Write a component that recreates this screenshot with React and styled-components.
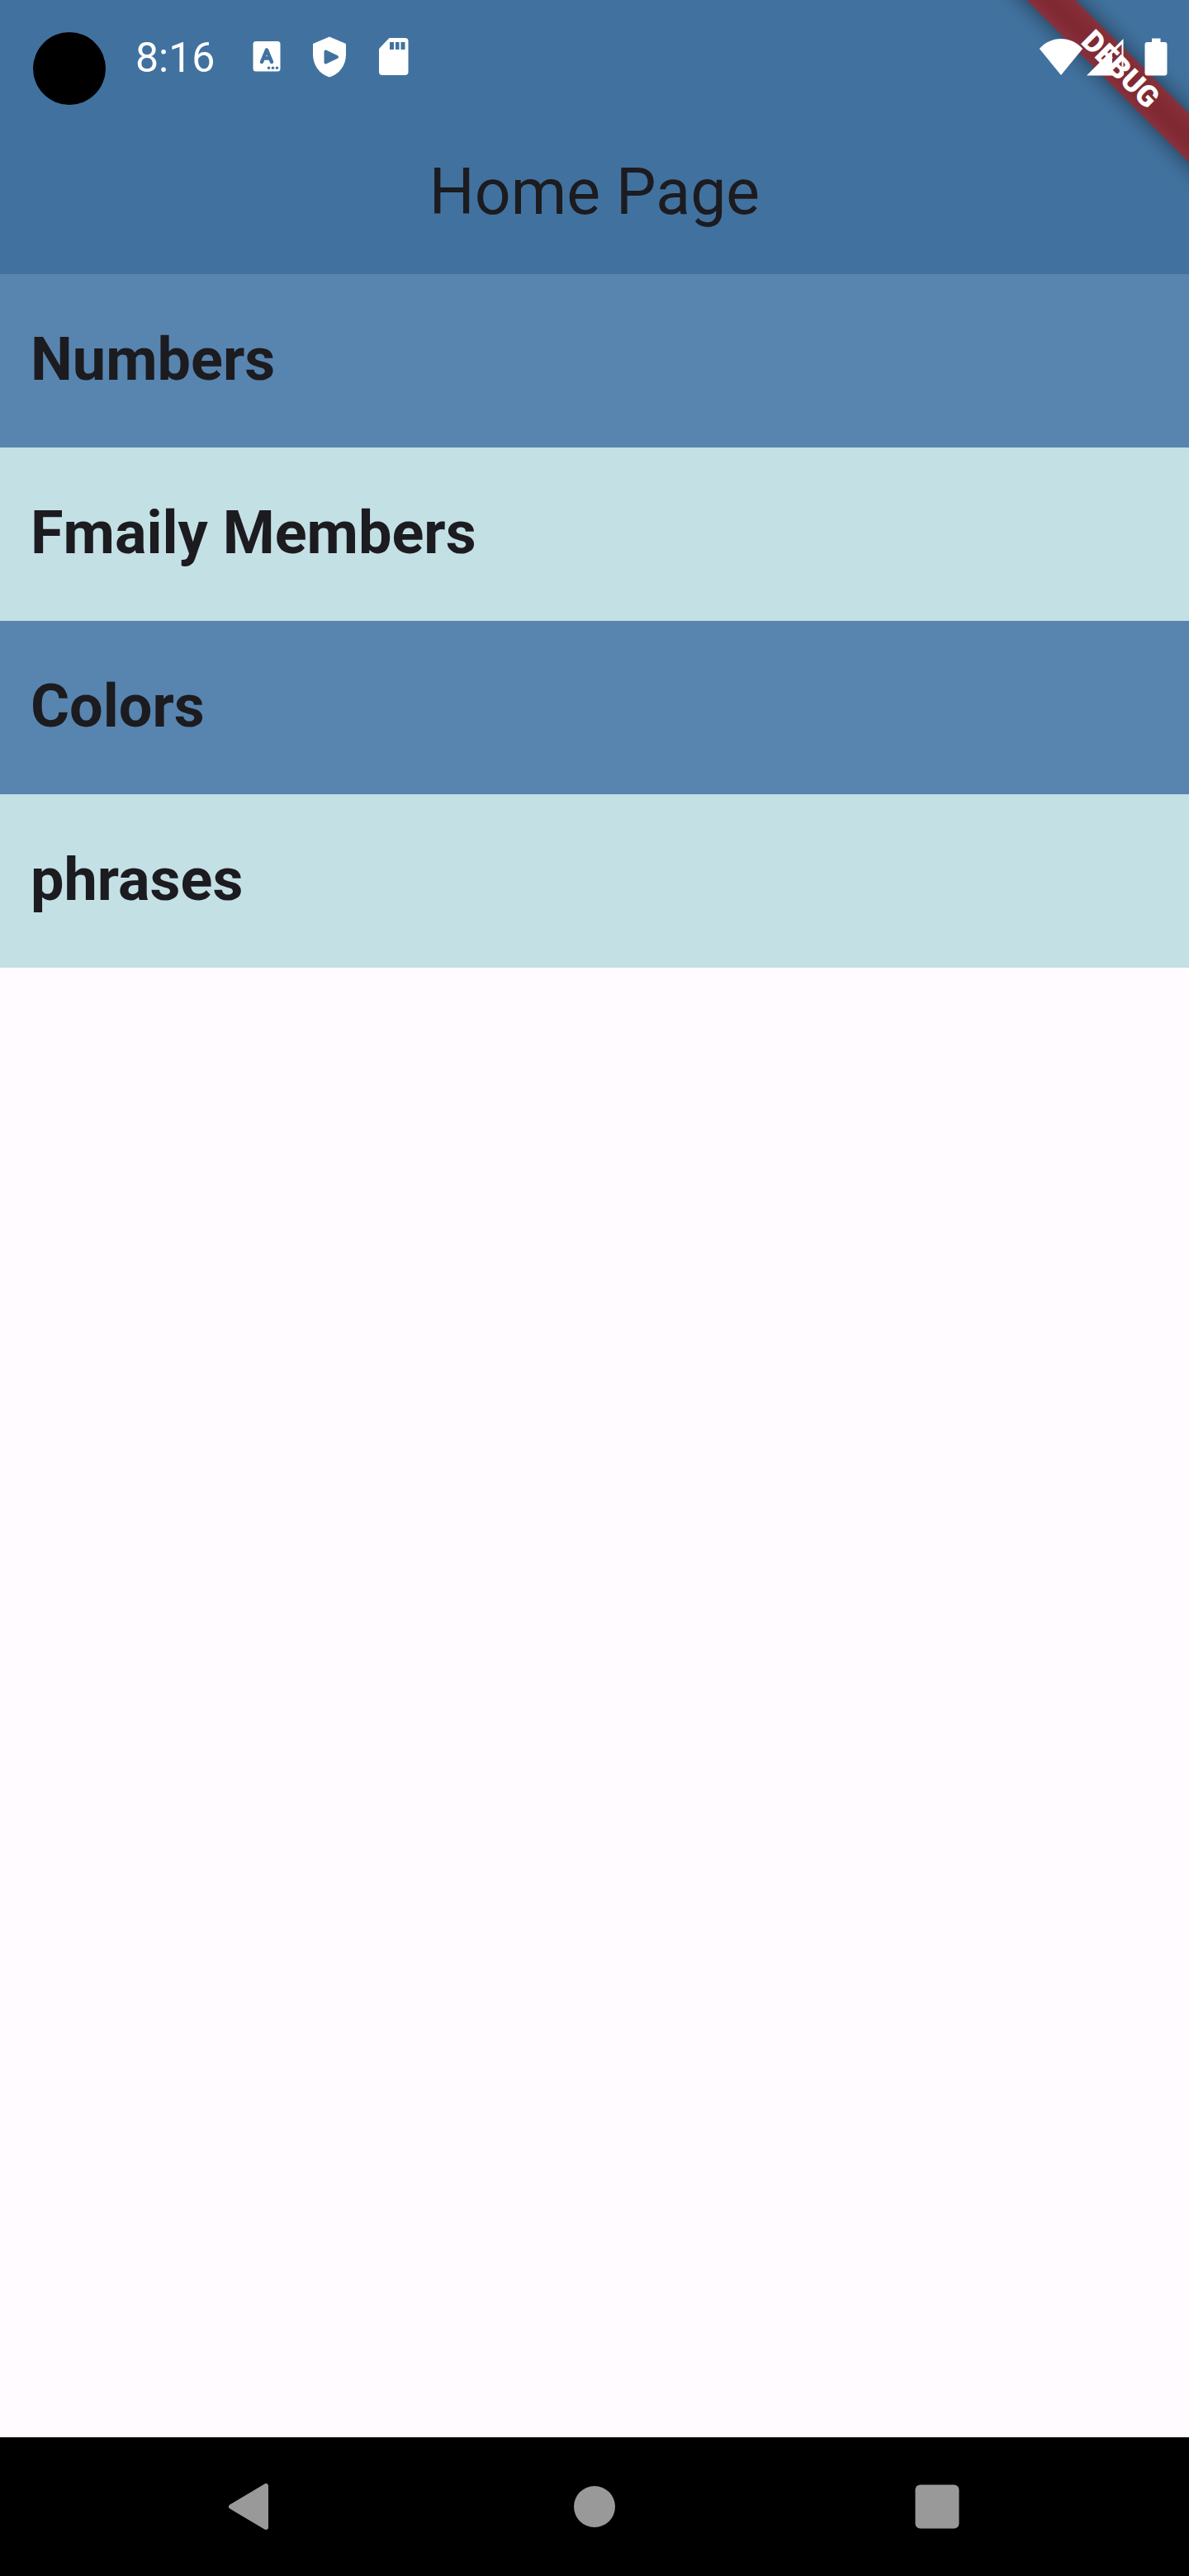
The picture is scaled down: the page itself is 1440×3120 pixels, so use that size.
import React from "react";
import styled, { createGlobalStyle } from "styled-components";

const GlobalStyle = createGlobalStyle`
  *, *::before, *::after { box-sizing: border-box; }
  body {
    margin: 0;
    background: #fffbff;
    color: #1c1b1f;
    font-family: Roboto, "Liberation Sans", sans-serif;
  }
`;

const Screen = styled.div`
  position: relative;
  display: flex;
  flex-direction: column;
  min-height: 100vh;
  overflow: hidden;
`;

const Header = styled.header`
  background: #41729f;
  padding-bottom: 4px;
`;

const StatusBar = styled.div`
  position: relative;
  z-index: 2;
  display: flex;
  align-items: center;
  justify-content: space-between;
  height: 138px;
  padding: 0 26px 0 164px;
  color: #ffffff;
`;

const Camera = styled.div`
  position: absolute;
  top: 39px;
  left: 40px;
  width: 88px;
  height: 88px;
  border-radius: 50%;
  background: #000000;
`;

const StatusGroup = styled.div`
  display: flex;
  align-items: center;
  gap: ${(p) => p.$gap}px;
`;

const Time = styled.time`
  padding-top: 2px;
  font-size: 50px;
  line-height: 58px;
`;

const Icon = styled.svg`
  display: block;
  flex: none;
  fill: currentColor;
`;

const Toolbar = styled.div`
  display: flex;
  align-items: center;
  justify-content: center;
  height: 190px;
`;

const Title = styled.h1`
  margin: 0;
  font-size: 77px;
  font-weight: 400;
  line-height: 92px;
`;

const DebugBanner = styled.div`
  position: absolute;
  z-index: 1;
  top: 63px;
  right: -117px;
  width: 400px;
  color: #ffffff;
  font-size: 36px;
  font-weight: 900;
  line-height: 42px;
  text-align: center;
  transform: rotate(45deg);

  &::before,
  &::after {
    content: "";
    position: absolute;
    inset: 0;
  }

  &::before {
    z-index: -2;
    background: rgba(0, 0, 0, 0.5);
    filter: blur(14px);
  }

  &::after {
    z-index: -1;
    background: rgba(183, 28, 28, 0.63);
  }
`;

const Categories = styled.ul`
  flex: 1;
  margin: 0;
  padding: 0;
  list-style: none;
`;

const Category = styled.a`
  display: flex;
  align-items: center;
  height: 210px;
  padding: 0 37px 2px;
  background: ${(p) => (p.$light ? "#c3e0e5" : "#5885af")};
  color: inherit;
  font-size: 72px;
  font-weight: 700;
  line-height: 84px;
  text-decoration: none;
`;

const NavBar = styled.nav`
  display: flex;
  justify-content: center;
  height: 168px;
  background: #000000;
`;

const NavButtons = styled.div`
  display: flex;
  align-items: center;
  justify-content: space-between;
  width: 914px;
  max-width: 100%;
`;

const NavButton = styled.button`
  padding: 0;
  border: 0;
  background: none;
  color: #999999;
`;

const categories = [
  { id: "numbers", label: "Numbers" },
  { id: "family", label: "Fmaily Members" },
  { id: "colors", label: "Colors" },
  { id: "phrases", label: "phrases" },
];

function KeyboardIcon() {
  return (
    <Icon width="34" height="50" viewBox="0 0 34 50" aria-hidden="true">
      <path
        fillRule="evenodd"
        d="M4 6H30Q33.500 6 33.500 9.500V39Q33.500 42.500 30 42.500H4Q.5 42.500 .5 39V9.500Q.5 6 4 6Z"
      />
      <path
        d="M11 31L17 16.500L23 31M13.500 26.500H20.500"
        fill="none"
        stroke="#41729f"
        strokeWidth="4.500"
        strokeLinecap="round"
        strokeLinejoin="round"
      />
      <g fill="#41729f">
        <circle cx="19.500" cy="38.300" r="1.700" />
        <circle cx="24.500" cy="38.300" r="1.700" />
        <circle cx="29.500" cy="38.300" r="1.700" />
      </g>
    </Icon>
  );
}

function ShieldIcon() {
  return (
    <Icon width="42" height="50" viewBox="0 0 42 50" aria-hidden="true">
      <path d="M21 .5L41 9V22C41 35 33 46 21 49.500C9 46 1 35 1 22V9Z" />
      <path
        d="M16.500 18.500V31.500L30 25Z"
        fill="#41729f"
        stroke="#41729f"
        strokeWidth="4"
        strokeLinejoin="round"
      />
    </Icon>
  );
}

function SdCardIcon() {
  return (
    <Icon width="38" height="50" viewBox="0 0 38 50" aria-hidden="true">
      <path
        fillRule="evenodd"
        d="M14 2H32.500Q36.500 2 36.500 6V43Q36.500 47 32.500 47H5Q1 47 1 43V16Q1 15 2 14L12.500 3Q13.500 2 14 2ZM14 7V16H19V7ZM21 7V16H25.500V7ZM27.500 7V16H32.500V7Z"
      />
    </Icon>
  );
}

function WifiIcon() {
  return (
    <Icon width="54" height="46" viewBox="0 0 54 46" aria-hidden="true">
      <path d="M27 45L.8 13C8 5 17 1 27 1S46 5 53.200 13Z" />
    </Icon>
  );
}

function SignalIcon() {
  return (
    <Icon width="46" height="46" viewBox="0 0 46 46" aria-hidden="true">
      <path
        fillRule="evenodd"
        d="M0 45.500L44.500 1V45.500ZM31 19V43H42.500V7.500Z"
      />
    </Icon>
  );
}

function BatteryIcon() {
  return (
    <Icon width="28" height="46" viewBox="0 0 28 46" aria-hidden="true">
      <path d="M9 .5H19.500V5H24.500Q27.500 5 27.500 8V42.500Q27.500 45.500 24.500 45.500H3.500Q.5 45.500 .5 42.500V8Q.5 5 3.500 5H9Z" />
    </Icon>
  );
}

export default function App() {
  return (
    <Screen>
      <GlobalStyle />
      <Header>
        <StatusBar>
          <Camera />
          <StatusGroup $gap={46}>
            <Time>8:16</Time>
            <StatusGroup $gap={38}>
              <KeyboardIcon />
              <ShieldIcon />
              <SdCardIcon />
            </StatusGroup>
          </StatusGroup>
          <StatusGroup $gap={4}>
            <WifiIcon />
            <StatusGroup $gap={24}>
              <SignalIcon />
              <BatteryIcon />
            </StatusGroup>
          </StatusGroup>
        </StatusBar>
        <Toolbar>
          <Title>Home Page</Title>
        </Toolbar>
      </Header>
      <DebugBanner>DEBUG</DebugBanner>
      <Categories>
        {categories.map((category, index) => (
          <li key={category.id}>
            <Category href={`#${category.id}`} $light={index % 2 === 1}>
              {category.label}
            </Category>
          </li>
        ))}
      </Categories>
      <NavBar>
        <NavButtons>
          <NavButton type="button" aria-label="Back">
            <Icon width="84" height="84" viewBox="0 0 84 84">
              <path
                d="M17 42L59 17V67Z"
                stroke="currentColor"
                strokeWidth="6"
                strokeLinejoin="round"
              />
            </Icon>
          </NavButton>
          <NavButton type="button" aria-label="Home">
            <Icon width="84" height="84" viewBox="0 0 84 84">
              <circle cx="42" cy="42" r="25" />
            </Icon>
          </NavButton>
          <NavButton type="button" aria-label="Recent apps">
            <Icon width="84" height="84" viewBox="0 0 84 84">
              <rect x="15.500" y="15.500" width="53" height="53" rx="6" />
            </Icon>
          </NavButton>
        </NavButtons>
      </NavBar>
    </Screen>
  );
}
